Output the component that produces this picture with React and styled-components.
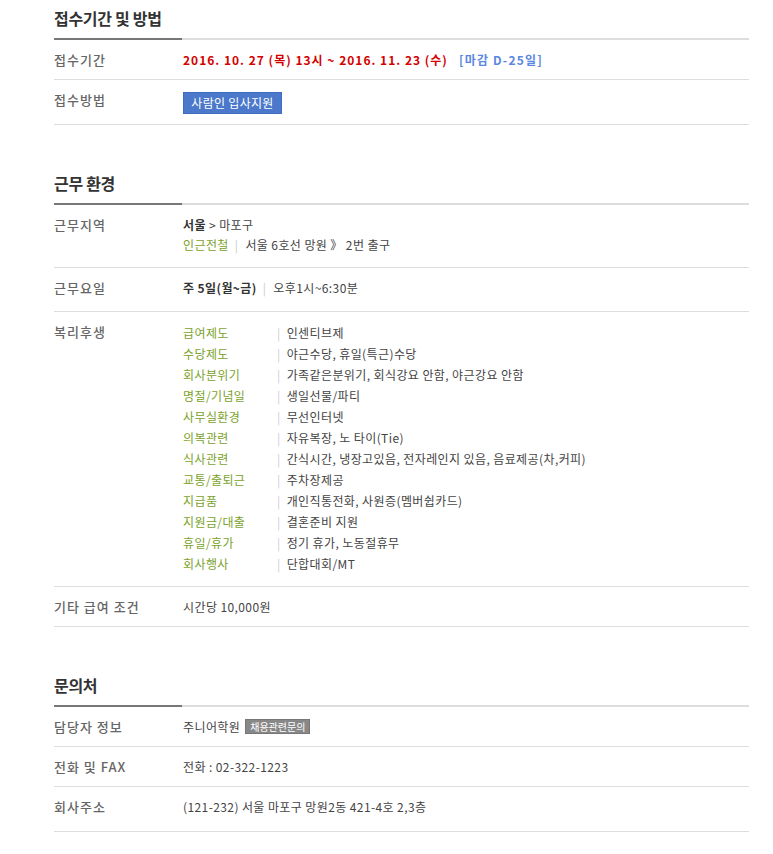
import React from 'react';
import styled, { createGlobalStyle } from 'styled-components';

const GlobalStyle = createGlobalStyle`
  body {
    margin: 0;
    background: #fff;
    font-family: "Noto Sans CJK KR", "Noto Sans", sans-serif;
    color: #333;
  }
  * { box-sizing: border-box; }
`;

const benefits = [
  ['급여제도', '인센티브제'],
  ['수당제도', '야근수당, 휴일(특근)수당'],
  ['회사분위기', '가족같은분위기, 회식강요 안함, 야근강요 안함'],
  ['명절/기념일', '생일선물/파티'],
  ['사무실환경', '무선인터넷'],
  ['의복관련', '자유복장, 노 타이(Tie)'],
  ['식사관련', '간식시간, 냉장고있음, 전자레인지 있음, 음료제공(차,커피)'],
  ['교통/출퇴근', '주차장제공'],
  ['지급품', '개인직통전화, 사원증(멤버쉽카드)'],
  ['지원금/대출', '결혼준비 지원'],
  ['휴일/휴가', '정기 휴가, 노동절휴무'],
  ['회사행사', '단합대회/MT'],
];

const App = () => {
  return (
    <Page>
      <GlobalStyle />
      <Section first>
        <Title>접수기간 및 방법</Title>
        <Row>
          <Label>접수기간</Label>
          <Value>
            <DateText>2016. 10. 27 (목) 13시 ~ 2016. 11. 23 (수)</DateText>
            <Deadline>[마감 D-25일]</Deadline>
          </Value>
        </Row>
        <Row pb={10}>
          <Label>접수방법</Label>
          <Value>
            <ApplyButton>사람인 입사지원</ApplyButton>
          </Value>
        </Row>
      </Section>

      <Section>
        <Title>근무 환경</Title>
        <Row pb={12}>
          <Label>근무지역</Label>
          <Value>
            <Line>
              <strong>서울</strong> &gt; 마포구
            </Line>
            <Line>
              <Green>인근전철</Green>
              <Sep>|</Sep>서울 6호선 망원 》 2번 출구
            </Line>
          </Value>
        </Row>
        <Row pb={13}>
          <Label>근무요일</Label>
          <Value>
            <Line>
              <strong>주 5일(월~금)</strong>
              <Sep>|</Sep>오후1시~6:30분
            </Line>
          </Value>
        </Row>
        <Row pb={10}>
          <Label>복리후생</Label>
          <Value>
            <BenefitList>
              {benefits.map(([term, desc]) => (
                <React.Fragment key={term}>
                  <Term>{term}</Term>
                  <Desc>{desc}</Desc>
                </React.Fragment>
              ))}
            </BenefitList>
          </Value>
        </Row>
        <Row>
          <Label>기타 급여 조건</Label>
          <Value>시간당 10,000원</Value>
        </Row>
      </Section>

      <Section>
        <Title>문의처</Title>
        <Row>
          <Label>담당자 정보</Label>
          <Value>
            주니어학원<Badge>채용관련문의</Badge>
          </Value>
        </Row>
        <Row>
          <Label>전화 및 FAX</Label>
          <Value>전화 : 02-322-1223</Value>
        </Row>
        <Row pb={14}>
          <Label>회사주소</Label>
          <Value>(121-232) 서울 마포구 망원2동 421-4호 2,3층</Value>
        </Row>
      </Section>
    </Page>
  );
};

const Page = styled.div`
  width: 695px;
  margin-left: 54px;
  padding-bottom: 20px;
`;

const Section = styled.section`
  margin-top: ${p => (p.first ? '0' : '40px')};
`;

const Title = styled.h2`
  margin: 0;
  padding: 6px 0 8px;
  font-size: 16px;
  line-height: 24px;
  font-weight: 700;
  letter-spacing: -0.3px;
  color: #333;
  border-bottom: 2px solid transparent;
  border-image: linear-gradient(to right, #777 129px, #ddd 129px) 1;
`;

const Row = styled.div`
  display: flex;
  align-items: flex-start;
  padding: 10px 0 ${p => p.pb ?? 9}px;
  border-bottom: 1px solid #ddd;
`;

const Label = styled.div`
  width: 129px;
  flex-shrink: 0;
  font-size: 13px;
  line-height: 20px;
  letter-spacing: 1px;
  color: #666;
  font-weight: 500;
`;

const Value = styled.div`
  flex: 1;
  font-size: 12px;
  line-height: 20px;
  letter-spacing: 0.4px;
  color: #444;

  strong {
    color: #333;
    font-weight: 700;
  }
`;

const Line = styled.div``;

const DateText = styled.span`
  color: #d40000;
  font-weight: 700;
  letter-spacing: 1px;
`;

const Deadline = styled.span`
  color: #5a87e2;
  font-weight: 700;
  letter-spacing: 1.2px;
  margin-left: 11px;
`;

const ApplyButton = styled.button`
  display: block;
  margin-top: 2px;
  width: 99px;
  height: 22px;
  padding: 0;
  border: 1px solid #3f6bc0;
  background: #4b78ca;
  color: #fff;
  font-family: inherit;
  font-size: 12px;
  line-height: 20px;
  letter-spacing: 0.3px;
  cursor: pointer;
`;

const Green = styled.span`
  color: #7ba22b;
`;

const Sep = styled.span`
  color: #ccc;
  margin: 0 7px 0 6px;
`;

const BenefitList = styled.div`
  display: grid;
  grid-template-columns: 94px 1fr;
  line-height: 21px;
  padding-bottom: 2px;
`;

const Term = styled.div`
  color: #7ba22b;
`;

const Desc = styled.div`
  &::before {
    content: '|';
    color: #ccc;
    margin-right: 6px;
  }
`;

const Badge = styled.span`
  display: inline-block;
  margin-left: 5px;
  padding: 0 4px;
  height: 15px;
  line-height: 13px;
  font-size: 10px;
  letter-spacing: 0;
  color: #fff;
  background: #888;
  border: 1px solid #777;
  vertical-align: 1px;
`;

export default App;
